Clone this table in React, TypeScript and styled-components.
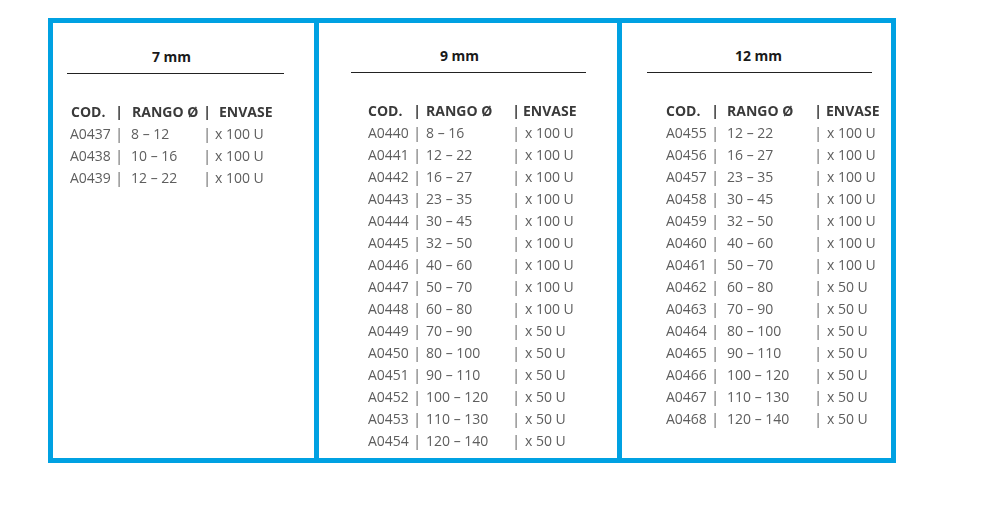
import React from "react";
import styled, { createGlobalStyle } from "styled-components";

const Global = createGlobalStyle`
  html, body { margin: 0; padding: 0; background: #fff; }
  body { font-family: "Open Sans", "Liberation Sans", sans-serif; }
`;

const Page = styled.div`
  width: 992px;
  height: 510px;
  padding: 18px 0 0 48px;
  box-sizing: border-box;
`;

const Frame = styled.div`
  display: grid;
  grid-template-columns: 261px 298px 269px;
  gap: 5px;
  padding: 5px;
  width: 848px;
  height: 445px;
  box-sizing: border-box;
  background: #00a1e2;
`;

const Cell = styled.div<{ $top: number }>`
  background: #fff;
  padding-top: ${(p) => p.$top}px;
  display: flex;
  flex-direction: column;
`;

const Title = styled.div<{ $left: number; $width: number }>`
  margin-left: ${(p) => p.$left}px;
  width: ${(p) => p.$width}px;
  text-align: center;
  font-size: 14px;
  line-height: 22px;
  font-weight: 700;
  color: #1a1a1a;
`;

const Rule = styled.div<{ $left: number; $width: number }>`
  margin-left: ${(p) => p.$left}px;
  width: ${(p) => p.$width}px;
  height: 1px;
  margin-top: 5px;
  background: #222;
`;

const Table = styled.div<{ $left: number }>`
  margin-top: 27px;
  margin-left: ${(p) => p.$left}px;
  display: flex;
  flex-direction: column;
  will-change: transform;
`;

const Row = styled.div<{ $cols: string; $head?: boolean }>`
  display: grid;
  grid-template-columns: ${(p) => p.$cols};
  font-size: 14px;
  line-height: 22px;
  white-space: nowrap;
  font-weight: ${(p) => (p.$head ? 700 : 400)};
  color: ${(p) => (p.$head ? "#3a3a3a" : "#5e5e5e")};
`;

const Text = styled.span<{ $indent?: number }>`
  padding-left: ${(p) => p.$indent ?? 0}px;
`;

const Pipe = styled.span`
  text-align: center;
`;

type Cfg = {
  left: number;
  pipe1: number;
  range: number;
  pipe2: number;
  env: number;
  headRange: number;
  headEnv: number;
  headShift: number;
};

type Col = {
  title: string;
  top: number;
  cellStart: number;
  lineLeft: number;
  lineRight: number;
  titleCenter: number;
  cfg: Cfg;
  rows: [string, string, string][];
};

const cols: Col[] = [
  {
    title: "7 mm",
    top: 23,
    cellStart: 53,
    lineLeft: 67,
    lineRight: 284,
    titleCenter: 171.5,
    cfg: { left: 70, pipe1: 119, range: 131, pipe2: 207, env: 215, headRange: 132, headEnv: 219, headShift: 1 },
    rows: [
      ["A0437", "8 – 12", "x 100 U"],
      ["A0438", "10 – 16", "x 100 U"],
      ["A0439", "12 – 22", "x 100 U"],
    ],
  },
  {
    title: "9 mm",
    top: 22,
    cellStart: 319,
    lineLeft: 351,
    lineRight: 586,
    titleCenter: 459.5,
    cfg: { left: 368, pipe1: 417, range: 426, pipe2: 516, env: 525, headRange: 426, headEnv: 523, headShift: 0 },
    rows: [
      ["A0440", "8 – 16", "x 100 U"],
      ["A0441", "12 – 22", "x 100 U"],
      ["A0442", "16 – 27", "x 100 U"],
      ["A0443", "23 – 35", "x 100 U"],
      ["A0444", "30 – 45", "x 100 U"],
      ["A0445", "32 – 50", "x 100 U"],
      ["A0446", "40 – 60", "x 100 U"],
      ["A0447", "50 – 70", "x 100 U"],
      ["A0448", "60 – 80", "x 100 U"],
      ["A0449", "70 – 90", "x 50 U"],
      ["A0450", "80 – 100", "x 50 U"],
      ["A0451", "90 – 110", "x 50 U"],
      ["A0452", "100 – 120", "x 50 U"],
      ["A0453", "110 – 130", "x 50 U"],
      ["A0454", "120 – 140", "x 50 U"],
    ],
  },
  {
    title: "12 mm",
    top: 22,
    cellStart: 622,
    lineLeft: 647,
    lineRight: 872,
    titleCenter: 758.5,
    cfg: { left: 666, pipe1: 715, range: 727, pipe2: 818, env: 827, headRange: 727, headEnv: 826, headShift: 0 },
    rows: [
      ["A0455", "12 – 22", "x 100 U"],
      ["A0456", "16 – 27", "x 100 U"],
      ["A0457", "23 – 35", "x 100 U"],
      ["A0458", "30 – 45", "x 100 U"],
      ["A0459", "32 – 50", "x 100 U"],
      ["A0460", "40 – 60", "x 100 U"],
      ["A0461", "50 – 70", "x 100 U"],
      ["A0462", "60 – 80", "x 50 U"],
      ["A0463", "70 – 90", "x 50 U"],
      ["A0464", "80 – 100", "x 50 U"],
      ["A0465", "90 – 110", "x 50 U"],
      ["A0466", "100 – 120", "x 50 U"],
      ["A0467", "110 – 130", "x 50 U"],
      ["A0468", "120 – 140", "x 50 U"],
    ],
  },
];

function template(c: Cfg) {
  return `${c.pipe1 - c.left - 6}px 12px ${c.pipe2 - c.pipe1 - 12}px 12px auto`;
}

function Column({ col }: { col: Col }) {
  const c = col.cfg;
  const tpl = template(c);
  return (
    <Cell $top={col.top}>
      <Title $left={col.lineLeft - col.cellStart} $width={2 * (col.titleCenter - col.lineLeft)}>
        {col.title}
      </Title>
      <Rule $left={col.lineLeft - col.cellStart} $width={col.lineRight - col.lineLeft} />
      <Table $left={c.left - col.cellStart}>
        <Row $cols={tpl} $head>
          <Text $indent={c.headShift}>COD.</Text>
          <Pipe>|</Pipe>
          <Text $indent={c.headRange - (c.pipe1 + 6)}>RANGO Ø</Text>
          <Pipe>|</Pipe>
          <Text $indent={c.headEnv - (c.pipe2 + 6)}>ENVASE</Text>
        </Row>
        {col.rows.map(([code, range, env]) => (
          <Row key={code} $cols={tpl}>
            <Text>{code}</Text>
            <Pipe>|</Pipe>
            <Text $indent={c.range - (c.pipe1 + 6)}>{range}</Text>
            <Pipe>|</Pipe>
            <Text $indent={c.env - (c.pipe2 + 6)}>{env}</Text>
          </Row>
        ))}
      </Table>
    </Cell>
  );
}

export default function App() {
  return (
    <>
      <Global />
      <Page>
        <Frame>
          {cols.map((col) => (
            <Column key={col.title} col={col} />
          ))}
        </Frame>
      </Page>
    </>
  );
}
